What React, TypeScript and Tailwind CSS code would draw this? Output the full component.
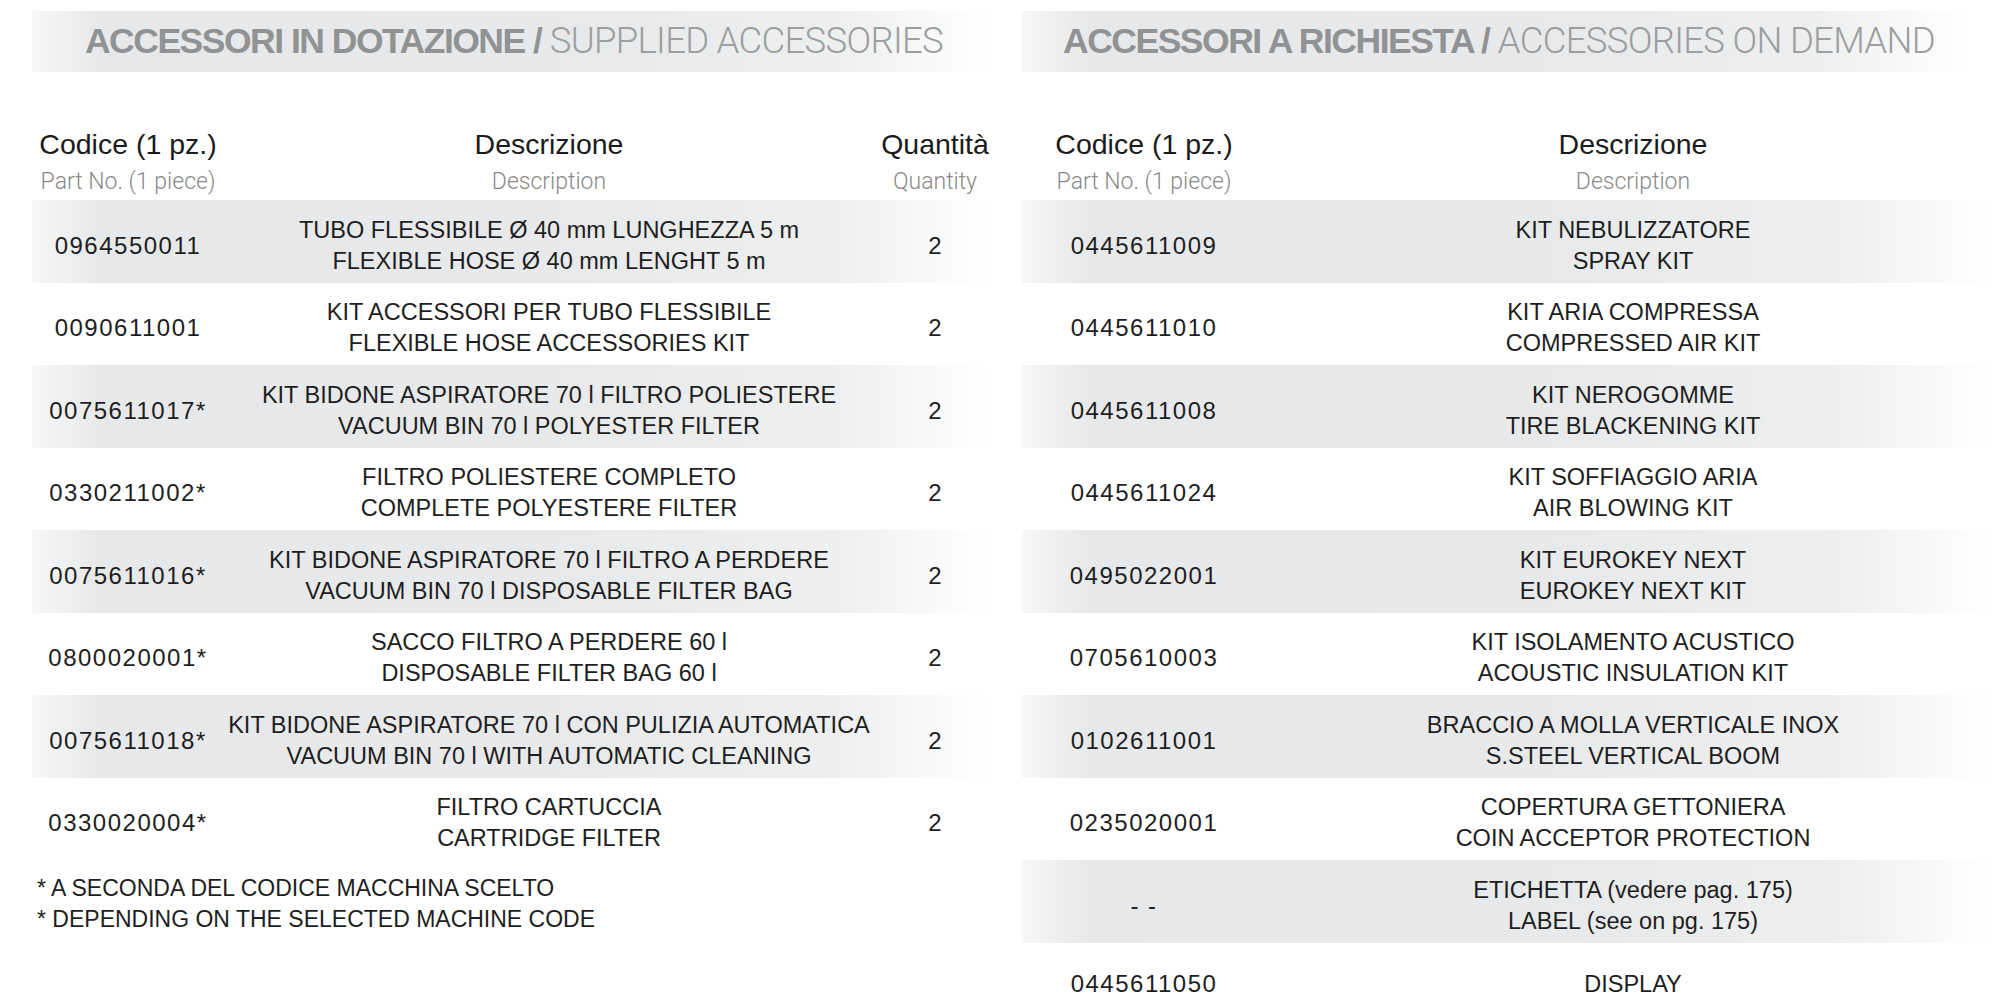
import React from 'react';

// Accessories tables: supplied (left) and on demand (right)

type Row = { code: string; it: string; en?: string; qty?: number };

const SUPPLIED: Row[] = [
  { code: '0964550011', it: 'TUBO FLESSIBILE Ø 40 mm LUNGHEZZA 5 m', en: 'FLEXIBLE HOSE Ø 40 mm LENGHT 5 m', qty: 2 },
  { code: '0090611001', it: 'KIT ACCESSORI PER TUBO FLESSIBILE', en: 'FLEXIBLE HOSE ACCESSORIES KIT', qty: 2 },
  { code: '0075611017*', it: 'KIT BIDONE ASPIRATORE 70 l FILTRO POLIESTERE', en: 'VACUUM BIN 70 l POLYESTER FILTER', qty: 2 },
  { code: '0330211002*', it: 'FILTRO POLIESTERE COMPLETO', en: 'COMPLETE POLYESTERE FILTER', qty: 2 },
  { code: '0075611016*', it: 'KIT BIDONE ASPIRATORE 70 l FILTRO A PERDERE', en: 'VACUUM BIN 70 l DISPOSABLE FILTER BAG', qty: 2 },
  { code: '0800020001*', it: 'SACCO FILTRO A PERDERE 60 l', en: 'DISPOSABLE FILTER BAG 60 l', qty: 2 },
  { code: '0075611018*', it: 'KIT BIDONE ASPIRATORE 70 l CON PULIZIA AUTOMATICA', en: 'VACUUM BIN 70 l WITH AUTOMATIC CLEANING', qty: 2 },
  { code: '0330020004*', it: 'FILTRO CARTUCCIA', en: 'CARTRIDGE FILTER', qty: 2 },
];

const ON_DEMAND: Row[] = [
  { code: '0445611009', it: 'KIT NEBULIZZATORE', en: 'SPRAY KIT' },
  { code: '0445611010', it: 'KIT ARIA COMPRESSA', en: 'COMPRESSED AIR KIT' },
  { code: '0445611008', it: 'KIT NEROGOMME', en: 'TIRE BLACKENING KIT' },
  { code: '0445611024', it: 'KIT SOFFIAGGIO ARIA', en: 'AIR BLOWING KIT' },
  { code: '0495022001', it: 'KIT EUROKEY NEXT', en: 'EUROKEY NEXT KIT' },
  { code: '0705610003', it: 'KIT ISOLAMENTO ACUSTICO', en: 'ACOUSTIC INSULATION KIT' },
  { code: '0102611001', it: 'BRACCIO A MOLLA VERTICALE INOX', en: 'S.STEEL VERTICAL BOOM' },
  { code: '0235020001', it: 'COPERTURA GETTONIERA', en: 'COIN ACCEPTOR PROTECTION' },
  { code: '- -', it: 'ETICHETTA (vedere pag. 175)', en: 'LABEL (see on pg. 175)' },
  { code: '0445611050', it: 'DISPLAY' },
];

const BAND =
  'bg-[linear-gradient(to_right,#f6f7f7_0%,#e7e8e9_7%,#e8e9ea_55%,#eeefef_84%,#ffffff_99%)]';

function SectionTitle({ bold, light, className }: { bold: string; light: string; className?: string }) {
  return (
    <div className={`flex h-[61px] items-center justify-center ${BAND} ${className ?? ''}`}>
      <span className="text-[35.5px] font-bold tracking-[-1.5px] text-[#909294]">{bold}&nbsp;</span>
      <span className="font-['Roboto',sans-serif] text-[36.5px] font-light tracking-[-0.7px] text-[#9c9ea0]">
        {light}
      </span>
    </div>
  );
}

function HeadCell({ it, en }: { it: string; en: string }) {
  return (
    <div className="flex flex-col items-center">
      <span className="text-[28.5px] leading-[36px] text-[#1b1b1b]">{it}</span>
      <span className="mt-[4px] font-['Roboto',sans-serif] text-[23px] font-light leading-[32px] text-[#8a8a8a]">
        {en}
      </span>
    </div>
  );
}

function Description({ row }: { row: Row }) {
  return (
    <div className="flex flex-col items-center text-[23.5px] leading-[31px] whitespace-nowrap">
      <span>{row.it}</span>
      {row.en && <span>{row.en}</span>}
    </div>
  );
}

export default function App() {
  return (
    <div className="h-[1000px] overflow-hidden bg-white font-['Liberation_Sans',Arial,sans-serif] text-[#1e1e1e]">
      <div className="grid grid-cols-[964px_1fr] gap-[26px] pl-[32px] pt-[11px]">
        {/* Supplied accessories */}
        <section>
          <SectionTitle bold="ACCESSORI IN DOTAZIONE /" light="SUPPLIED ACCESSORIES" />
          <div className="mt-[54px] mb-[2px] grid grid-cols-[192px_650px_122px]">
            <HeadCell it="Codice (1 pz.)" en="Part No. (1 piece)" />
            <HeadCell it="Descrizione" en="Description" />
            <HeadCell it="Quantità" en="Quantity" />
          </div>
          {SUPPLIED.map((row, i) => (
            <div
              key={row.code}
              className={`grid h-[82.5px] grid-cols-[192px_650px_122px] items-center pt-[9px] ${i % 2 === 0 ? BAND : ''}`}
            >
              <span className="text-center text-[24px] tracking-[1.5px]">{row.code}</span>
              <Description row={row} />
              <span className="text-center text-[24px]">{row.qty}</span>
            </div>
          ))}
          <div className="mt-[13px] pl-[5px] text-[23px] leading-[31px]">
            <p>* A SECONDA DEL CODICE MACCHINA SCELTO</p>
            <p>* DEPENDING ON THE SELECTED MACHINE CODE</p>
          </div>
        </section>

        {/* Accessories on demand */}
        <section>
          <SectionTitle bold="ACCESSORI A RICHIESTA /" light="ACCESSORIES ON DEMAND" className="mr-[24px]" />
          <div className="mt-[54px] mb-[2px] grid grid-cols-[244px_1fr]">
            <HeadCell it="Codice (1 pz.)" en="Part No. (1 piece)" />
            <HeadCell it="Descrizione" en="Description" />
          </div>
          {ON_DEMAND.map((row, i) => (
            <div
              key={row.code}
              className={`grid h-[82.5px] grid-cols-[244px_1fr] items-center ${row.en ? 'pt-[9px]' : 'pt-[1px]'} ${i % 2 === 0 ? BAND : ''}`}
            >
              <span className="text-center text-[24px] tracking-[1.5px]">{row.code}</span>
              <Description row={row} />
            </div>
          ))}
        </section>
      </div>
    </div>
  );
}
